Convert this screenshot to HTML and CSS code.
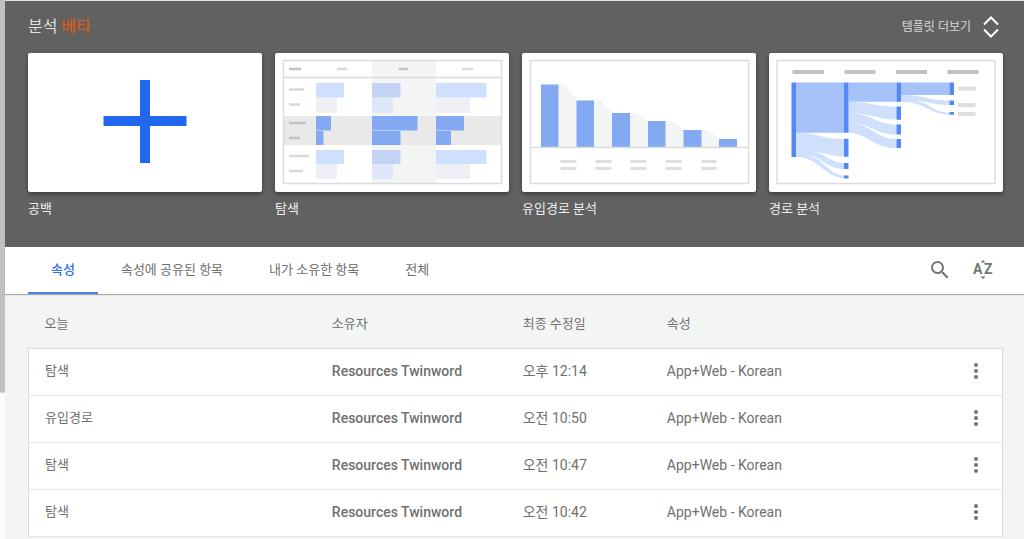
FILE: index.html
```html
<!DOCTYPE html>
<html lang="ko">
<head>
<meta charset="utf-8">
<meta name="viewport" content="width=device-width, initial-scale=1">
<title>분석</title>
<link rel="stylesheet" href="styles.css">
</head>
<body>
<div class="app">
  <div class="rail"><div class="rail-thumb"></div></div>
  <main class="page">
    <section class="hero">
      <header class="hero-head">
        <h1 class="title">분석 <span class="beta">베타</span></h1>
        <button class="more" type="button">템플릿 더보기
          <svg class="more-icon" viewBox="0 0 16 22" fill="none" stroke="#fff" stroke-width="2"><path d="M1 8.500 8 1.500 15 8.500M1 13.500 8 20.500 15 13.500"/></svg>
        </button>
      </header>
      <div class="templates">
        <button class="template" type="button">
          <span class="thumb"><svg viewBox="0 0 234 139">
            <path fill="#2168ee" d="M112 27h10v36h36.500v10H122v37h-10V73H75.500V63H112z"/>
          </svg></span>
          <span class="caption">공백</span>
        </button>
        <button class="template" type="button">
          <span class="thumb"><svg viewBox="0 0 234 139">
            <path fill="#f3f5f5" d="M97 7h64v123H97z"/>
            <path fill="#e9e9e9" d="M9 63h217v29H9z"/>
            <path fill="none" stroke="#dcdcdc" stroke-width="1.400" d="M8.500 7.500h218v123h-218zM8.500 24.500h218"/>
            <path fill="#cfe0fd" d="M41 30h28v14.500H41zM161 30h50.500v14.500H161zM41 97h28v14H41zM161 97h50.500v14H161z"/>
            <path fill="#eff0f6" d="M41 45h21v15H41zM161 45h34v15h-34zM41 111h21v15H41zM161 111h34v15h-34z"/>
            <path fill="#c2d3f6" d="M97 30h28.500v14.500H97zM97 97h28.500v14H97z"/>
            <path fill="#dfe8fa" d="M97 45h21v15H97zM97 111h21v15H97z"/>
            <path fill="#84a9f3" d="M41 63h15v14.500H41zM41 78h7.500v14H41zM97 63h45.500v14.500H97zM97 78h28.500v14H97zM161 63h28v14.500h-28zM161 78h15v14h-15z"/>
            <path stroke="#d9d9d9" stroke-width="2.500" d="M62 16h10M187 16h11M14 36.500h15M14 51.500h11M14 103h20M14 118h14"/>
            <path stroke="#c2c2c2" stroke-width="2.500" d="M14 16h12M124 16h9M14 70h17M14 85h11"/>
          </svg></span>
          <span class="caption">탐색</span>
        </button>
        <button class="template" type="button">
          <span class="thumb"><svg viewBox="0 0 234 139">
            <path fill="#f3f5f5" d="M36.500 31.500h6.500L54.500 47h24l11.500 13h24l12 8h24l11.500 9h24l12 9v8.500H36.500z"/>
            <path fill="#84a9f3" d="M19 31.500h17.500v63H19zM54.500 47.500H72v47H54.500zM90 60h18v34.500H90zM126 68h17.500v26.500H126zM161.500 77h18v17.500h-18zM197 86h18v8.500h-18z"/>
            <path fill="none" stroke="#dcdcdc" stroke-width="1.400" d="M8.500 7.500h218v123h-218zM8.500 94.500h218"/>
            <path stroke="#dedede" stroke-width="3" d="M38.500 108.500h16M73.500 108.500h16M108.500 108.500h16M143.500 108.500h16M179.500 108.500h15M38.500 115.500h16M73.500 115.500h16M108.500 115.500h16M143.500 115.500h16M179.500 115.500h15"/>
          </svg></span>
          <span class="caption">유입경로 분석</span>
        </button>
        <button class="template" type="button">
          <span class="thumb"><svg viewBox="0 0 234 139">
            <path fill="none" stroke="#dcdcdc" stroke-width="1.400" d="M8 7.500h218v123H8z"/>
            <g transform="translate(-.5 0)">
              <path stroke="#c2c2c2" stroke-width="4" d="M24 19h31.500M76 19h31M127.500 19h31M179 19h31"/>
              <path stroke="#dedede" stroke-width="4" d="M189.500 35.500h17.500M189.500 52h17.500M189.500 61h17.500"/>
              <path fill="#cfe0fd" d="M27.500 79.700C50 79.700 52 86 75.500 86v17.500C61 103.500 58 99 44 99 58 100 61 110 75.500 110v6C58 116 52 102 38 102.500 55 104 60 122.500 75.500 122.500v2.500C57 125 50 104 27.500 104z"/>
              <path fill="#cfe0fd" d="M80 48.700C104 48.700 104 53.500 128 53.500v13C108 66.500 102 60 84 60.500 104 61 108 71.500 128 71.500v10C106 81.500 102 70.500 84 70.500 104 72 108 86 128 86v9C104 95 98 79.700 80 79.700z"/>
              <path fill="#cfe0fd" d="M132.500 42C158 42 156 47.500 181 47.500V52C164 52 160 48 148 48 162 50 164 59.500 181 59.500v2C160 61.500 158 48.700 132.500 48.700z"/>
              <path fill="#a5c2f9" d="M27.500 29.500h48v50.200h-48zM80 29.500h48v19.200H80zM132.500 29.500H181V42h-48.500z"/>
              <path fill="#5488f4" d="M23 29.500h4.500V104H23zM75.500 29.500H80v50.200h-4.500zM75.500 85.700H80v18h-4.500zM75.500 110H80v6h-4.500zM75.500 122.500H80v3h-4.500zM128 29.500h4.500v19.200H128zM128 53.500h4.500v13.200H128zM128 71.500h4.500v10H128zM128 86h4.500v9H128zM181 29.500h4.500V42H181zM181 47.500h4.500V52H181zM181 59h4.500v2.700H181z"/>
            </g>
          </svg></span>
          <span class="caption">경로 분석</span>
        </button>
      </div>
    </section>

    <div class="toolbar">
      <nav class="tabs">
        <button class="tab tab-active" type="button">속성</button>
        <button class="tab" type="button">속성에 공유된 항목</button>
        <button class="tab" type="button">내가 소유한 항목</button>
        <button class="tab" type="button">전체</button>
      </nav>
      <div class="actions">
        <button class="icon-button" type="button" aria-label="검색">
          <svg class="icon" viewBox="0 0 24 24"><path d="M15.500 14h-.79l-.28-.27A6.471 6.471 0 0 0 16 9.500 6.500 6.500 0 1 0 9.500 16c1.610 0 3.090-.59 4.230-1.570l.27.28v.79l5 4.990L20.490 19l-4.990-5zm-6 0C7.010 14 5 11.990 5 9.500S7.010 5 9.500 5 14 7.010 14 9.500 11.990 14 9.500 14z"/></svg>
        </button>
        <button class="icon-button" type="button" aria-label="정렬">
          <svg class="icon" viewBox="0 0 24 24"><path d="M9.500 4.500 12 2l2.500 2.500zM9.500 18.500 12 21l2.500-2.500z"/><text class="sort-letter" x="2" y="16">A</text><text class="sort-letter" x="13" y="16">Z</text></svg>
        </button>
      </div>
    </div>

    <section class="list">
      <table class="table">
        <colgroup><col class="col-name"><col class="col-owner"><col class="col-date"><col><col class="col-menu"></colgroup>
        <thead>
          <tr><th>오늘</th><th>소유자</th><th>최종 수정일</th><th>속성</th><th></th></tr>
        </thead>
        <tbody>
          <tr><td>탐색</td><td class="owner">Resources Twinword</td><td>오후 12:14</td><td>App+Web - Korean</td>
            <td class="menu-cell"><button class="icon-button" type="button" aria-label="메뉴"><svg class="icon" viewBox="0 0 24 24"><circle cx="12" cy="6" r="2"/><circle cx="12" cy="12" r="2"/><circle cx="12" cy="18" r="2"/></svg></button></td></tr>
          <tr><td>유입경로</td><td class="owner">Resources Twinword</td><td>오전 10:50</td><td>App+Web - Korean</td>
            <td class="menu-cell"><button class="icon-button" type="button" aria-label="메뉴"><svg class="icon" viewBox="0 0 24 24"><circle cx="12" cy="6" r="2"/><circle cx="12" cy="12" r="2"/><circle cx="12" cy="18" r="2"/></svg></button></td></tr>
          <tr><td>탐색</td><td class="owner">Resources Twinword</td><td>오전 10:47</td><td>App+Web - Korean</td>
            <td class="menu-cell"><button class="icon-button" type="button" aria-label="메뉴"><svg class="icon" viewBox="0 0 24 24"><circle cx="12" cy="6" r="2"/><circle cx="12" cy="12" r="2"/><circle cx="12" cy="18" r="2"/></svg></button></td></tr>
          <tr><td>탐색</td><td class="owner">Resources Twinword</td><td>오전 10:42</td><td>App+Web - Korean</td>
            <td class="menu-cell"><button class="icon-button" type="button" aria-label="메뉴"><svg class="icon" viewBox="0 0 24 24"><circle cx="12" cy="6" r="2"/><circle cx="12" cy="12" r="2"/><circle cx="12" cy="18" r="2"/></svg></button></td></tr>
        </tbody>
      </table>
    </section>
  </main>
</div>
</body>
</html>
```
FILE: styles.css
```css
* {
  box-sizing: border-box;
}

body {
  margin: 0;
  background: #f3f5f5;
  color: #707070;
  font-family: Roboto, "Noto Sans CJK KR", sans-serif;
  font-size: 13px;
  line-height: 20px;
}

button {
  margin: 0;
  padding: 0;
  border: 0;
  background: none;
  color: inherit;
  font: inherit;
  cursor: pointer;
}

svg {
  display: block;
}

.app {
  display: flex;
  min-height: 100vh;
}

.rail {
  flex: none;
  width: 5px;
  height: 100vh;
  background: #fafbfb;
}

.rail-thumb {
  height: 73%;
  border-radius: 0 0 3px 3px;
  background: #c1c1c1;
}

.page {
  flex: 1;
  min-width: 0;
}

.hero {
  padding: 0 21px 28px 23px;
  border-top: 1px solid #dfe5e5;
  background: #616161;
}

.hero-head {
  display: flex;
  align-items: center;
  justify-content: space-between;
  height: 52px;
}

.title {
  margin: 0;
  color: #dedede;
  font-size: 16px;
  font-weight: 400;
}

.beta {
  color: #e8590c;
}

.more {
  display: flex;
  align-items: center;
  gap: 12px;
  padding-right: 4px;
  color: #d6d6d6;
  font-size: 12px;
}

.more-icon {
  width: 16px;
  height: 22px;
}

.templates {
  display: grid;
  grid-template-columns: repeat(4, 1fr);
  gap: 13px;
}

.template {
  display: flex;
  flex-direction: column;
  gap: 7px;
  text-align: left;
}

.thumb {
  width: 100%;
  border-radius: 2px;
  background: #fff;
  box-shadow: 0 2px 4px rgba(0, 0, 0, 0.4);
}

.caption {
  color: #ededed;
}

.toolbar {
  display: flex;
  justify-content: space-between;
  height: 47px;
  padding: 0 17px 0 23px;
  background: #fff;
  box-shadow: 0 1px 1px rgba(0, 0, 0, 0.3);
}

.tabs {
  display: flex;
}

.tab {
  padding: 0 23px;
  border-bottom: 2px solid transparent;
}

.tab-active {
  border-bottom-color: #4a80f0;
  color: #2a6df4;
  font-weight: 500;
}

.actions {
  display: flex;
  align-items: center;
  gap: 19px;
  padding: 0 12px 2px 0;
}

.icon {
  width: 24px;
  height: 24px;
  fill: #757575;
}

.sort-letter {
  font-size: 14px;
  font-weight: 700;
}

.list {
  padding: 7px 21px 3px 23px;
}

.table {
  width: 100%;
  border-collapse: collapse;
  table-layout: fixed;
}

.col-name {
  width: 29.5%;
}

.col-owner {
  width: 19.6%;
}

.col-date {
  width: 14.8%;
}

.col-menu {
  width: 53px;
}

th,
td {
  height: 47px;
  padding: 0 0 0 16px;
  text-align: left;
  font-weight: 400;
}

td {
  padding-bottom: 2px;
  border-bottom: 1px solid #e6e6e6;
  font-size: 14px;
}

td:first-child {
  font-size: 13px;
}

tbody {
  border: 1px solid #d9dbdb;
  background: #fff;
}

td.owner {
  font-weight: 500;
}

td.menu-cell {
  padding: 0 14px 2px;
}

.menu-cell .icon-button {
  display: block;
}
```
